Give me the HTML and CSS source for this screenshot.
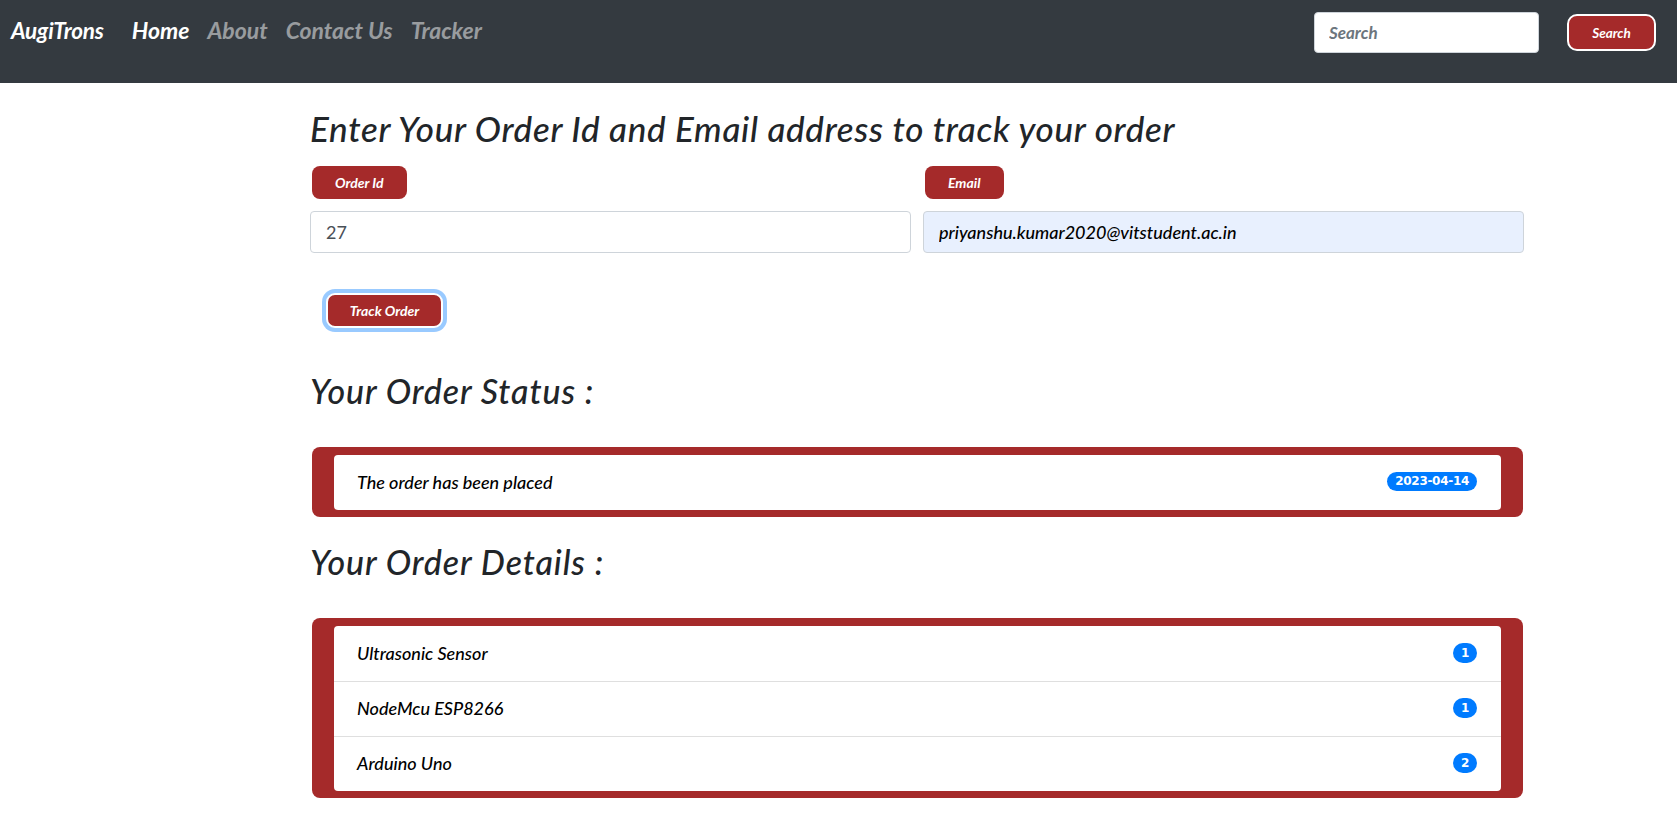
FILE: index.html
```html
<!DOCTYPE html>
<html lang="en">
<head>
<meta charset="utf-8">
<title>AugiTrons - Tracker</title>
<link rel="stylesheet" href="styles.css">
</head>
<body>
<nav class="navbar">
  <a class="brand" href="#">AugiTrons</a>
  <ul class="nav-links">
    <li><a class="nav-link active" href="#">Home</a></li>
    <li><a class="nav-link" href="#">About</a></li>
    <li><a class="nav-link" href="#">Contact Us</a></li>
    <li><a class="nav-link" href="#">Tracker</a></li>
  </ul>
  <form class="search">
    <input class="search-input" type="search" placeholder="Search">
    <button class="search-btn" type="button">Search</button>
  </form>
</nav>

<main class="container">
  <h2 class="title">Enter Your Order Id and Email address to track your order</h2>
  <div class="form-row">
    <div class="field">
      <span class="label-btn">Order Id</span>
      <input class="input plain" type="text" value="27">
    </div>
    <div class="field">
      <span class="label-btn">Email</span>
      <input class="input autofill" type="text" value="priyanshu.kumar2020@vitstudent.ac.in">
    </div>
  </div>
  <button class="track-btn" type="button">Track Order</button>

  <h2 class="section section-status">Your Order Status :</h2>
  <div class="panel">
    <ul class="list">
      <li class="item">The order has been placed <span class="badge">2023-04-14</span></li>
    </ul>
  </div>

  <h2 class="section section-details">Your Order Details :</h2>
  <div class="panel">
    <ul class="list">
      <li class="item">Ultrasonic Sensor <span class="badge round">1</span></li>
      <li class="item">NodeMcu ESP8266 <span class="badge round">1</span></li>
      <li class="item">Arduino Uno <span class="badge round">2</span></li>
    </ul>
  </div>
</main>
</body>
</html>
```
FILE: styles.css
```css
* { box-sizing: border-box; }

body {
  margin: 0;
  font-family: Lato, "Open Sans", sans-serif;
  font-style: italic;
  color: #212529;
  background: #fff;
}

.navbar {
  height: 83px;
  background: #343a40;
  display: flex;
  align-items: flex-start;
  padding: 10px 21px 0 11px;
}

.brand {
  font-size: 22.5px;
  font-weight: 700;
  color: #fff;
  text-decoration: none;
  line-height: 41px;
  margin-right: 19px;
  letter-spacing: -0.2px;
}

.nav-links {
  list-style: none;
  margin: 0;
  padding: 0;
  display: flex;
}

.nav-link {
  display: block;
  padding: 0 9px;
  font-size: 23px;
  font-weight: 700;
  line-height: 41px;
  color: rgba(255, 255, 255, 0.5);
  text-decoration: none;
}

.nav-link.active { color: #fff; }

.search {
  margin-left: auto;
  margin-top: 2px;
  display: flex;
  align-items: center;
  gap: 28px;
  height: 41px;
}

.search-input {
  width: 225px;
  height: 41px;
  border: 1px solid #ced4da;
  border-radius: 4px;
  padding: 0 14px;
  font-family: inherit;
  font-style: italic;
  font-weight: 700;
  font-size: 17px;
  color: #495057;
}

.search-input::placeholder { color: #6c757d; }

.search-btn {
  width: 89px;
  height: 37px;
  background: #a52a2a;
  color: #fff;
  border: 2px solid #fff;
  border-radius: 10px;
  font-family: inherit;
  font-style: italic;
  font-weight: 700;
  font-size: 13.5px;
}

.container {
  margin: 24px 0 0 310px;
  width: 1214px;
}

.title {
  margin: 0;
  font-size: 35px;
  font-weight: 500;
  line-height: 42px;
  letter-spacing: 0.7px;
}

.form-row {
  display: flex;
  gap: 12px;
  margin-top: 17px;
}

.field {
  flex: 1;
  display: flex;
  flex-direction: column;
  align-items: flex-start;
  gap: 12px;
}

.label-btn {
  margin-left: 2px;
  height: 33px;
  padding: 0 23px;
  display: flex;
  align-items: center;
  background: #a52a2a;
  color: #fff;
  border-radius: 8px;
  font-size: 14px;
  font-weight: 700;
}

.input {
  width: 100%;
  height: 42px;
  border: 1px solid #ced4da;
  border-radius: 4px;
  padding: 0 15px;
  font-size: 18px;
  color: #495057;
}

.input.plain {
  font-family: Lato, sans-serif;
  font-style: normal;
}

.input.autofill {
  background: #e8f0fe;
  font-family: Lato, sans-serif;
  font-style: italic;
  font-weight: 500;
  color: #000;
}

.track-btn {
  display: block;
  margin: 40px 0 0 16px;
  width: 117px;
  height: 35px;
  background: #a52a2a;
  color: #fff;
  border: 2px solid #fff;
  border-radius: 9px;
  box-shadow: 0 0 0 4px rgba(0, 123, 255, 0.4);
  font-family: inherit;
  font-style: italic;
  font-weight: 700;
  font-size: 14px;
}

.section {
  margin: 0;
  font-size: 34px;
  font-weight: 500;
  line-height: 40px;
  letter-spacing: 0.9px;
}

.section-status { margin-top: 43px; }
.section-details { margin-top: 25px; }

.section + .panel { margin-top: 36px; }

.panel {
  margin-left: 2px;
  width: 1211px;
  background: #a52a2a;
  border-radius: 8px;
  padding: 8px 22px 7px;
}

.list {
  list-style: none;
  margin: 0;
  padding: 0;
  background: #fff;
  border-radius: 4px;
}

.item {
  height: 55px;
  display: flex;
  align-items: center;
  justify-content: space-between;
  padding: 0 24px 2px 23px;
  font-size: 18px;
  font-weight: 500;
  color: #000;
}

.item + .item { border-top: 1px solid #dfdfdf; }

.badge {
  display: inline-block;
  background: #007bff;
  color: #fff;
  font-family: "DejaVu Sans", Verdana, sans-serif;
  font-style: normal;
  font-weight: 700;
  font-size: 12px;
  line-height: 19px;
  padding: 0 8px;
  border-radius: 10px;
  letter-spacing: -0.3px;
}

.badge.round {
  width: 24px;
  padding: 0;
  text-align: center;
  line-height: 20px;
}
```
